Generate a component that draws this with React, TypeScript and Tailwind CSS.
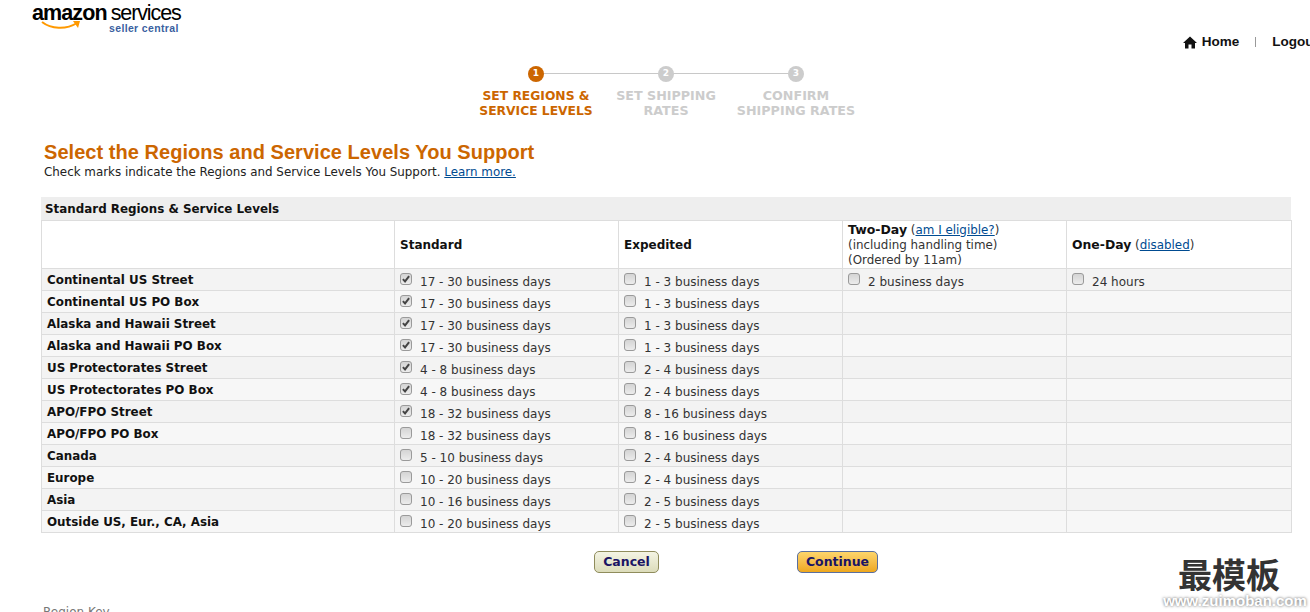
import React from "react";

const verdana = "font-['DejaVu_Sans',Verdana,sans-serif]";

type Row = { name: string; std: string; exp: string; on?: boolean };
const rows: Row[] = [
  { name: "Continental US Street", std: "17 - 30 business days", exp: "1 - 3 business days", on: true },
  { name: "Continental US PO Box", std: "17 - 30 business days", exp: "1 - 3 business days", on: true },
  { name: "Alaska and Hawaii Street", std: "17 - 30 business days", exp: "1 - 3 business days", on: true },
  { name: "Alaska and Hawaii PO Box", std: "17 - 30 business days", exp: "1 - 3 business days", on: true },
  { name: "US Protectorates Street", std: "4 - 8 business days", exp: "2 - 4 business days", on: true },
  { name: "US Protectorates PO Box", std: "4 - 8 business days", exp: "2 - 4 business days", on: true },
  { name: "APO/FPO Street", std: "18 - 32 business days", exp: "8 - 16 business days", on: true },
  { name: "APO/FPO PO Box", std: "18 - 32 business days", exp: "8 - 16 business days" },
  { name: "Canada", std: "5 - 10 business days", exp: "2 - 4 business days" },
  { name: "Europe", std: "10 - 20 business days", exp: "2 - 4 business days" },
  { name: "Asia", std: "10 - 16 business days", exp: "2 - 5 business days" },
  { name: "Outside US, Eur., CA, Asia", std: "10 - 20 business days", exp: "2 - 5 business days" },
];

function Check({ on }: { on?: boolean }) {
  return (
    <span className="inline-flex w-[12px] h-[12px] shrink-0 items-center justify-center rounded-[3px] border border-[#9a9a9a] bg-gradient-to-b from-[#d4d4d4] to-[#ececec]">
      {on && (
        <svg width="8" height="8" viewBox="0 0 9 9">
          <path d="M1 4.6 L3.4 7.2 L8 1.2" fill="none" stroke="#444" strokeWidth="2.2" />
        </svg>
      )}
    </span>
  );
}

function Opt({ on, text }: { on?: boolean; text: string }) {
  return (
    <div className="flex items-start gap-[8px] h-[21px]">
      <span className="mt-[4px] flex"><Check on={on} /></span>
      <span className="mt-[6px] leading-[15px] whitespace-nowrap">{text}</span>
    </div>
  );
}

function Step({ n, active, a, b, line }: { n: number; active?: boolean; a: string; b: string; line?: boolean }) {
  return (
    <div className="relative w-[130px] flex flex-col items-center">
      {line && <span className="absolute left-[65px] top-[7px] h-px w-[130px] bg-[#c8c8c8]" />}
      <span className={`relative z-10 flex h-4 w-4 items-center justify-center rounded-full text-[9px] font-bold text-white ${active ? "bg-[#cc6600]" : "bg-[#cccccc]"}`}>{n}</span>
      <div className={`text-center leading-[15px] font-bold whitespace-nowrap ${active ? "mt-[7px] text-[12.3px] text-[#cc6600]" : "mt-[6px] text-[12.7px] text-[#cccccc]"}`}>
        <div>{a}</div>
        <div>{b}</div>
      </div>
    </div>
  );
}

export default function App() {
  return (
    <div className={`relative h-[612px] w-[1310px] overflow-hidden bg-white text-[12px] text-[#333] ${verdana}`}>
      <header className="flex h-[66px] items-start justify-between pl-[32px]">
        <div className="relative h-[36px] w-[150px] mt-[3px]">
          <div className="flex items-baseline whitespace-nowrap text-[21.5px] leading-[20px] text-black font-['Liberation_Sans',Arial,sans-serif]">
            <span className="font-bold tracking-[-0.9px]">amazon</span>
            <span className="ml-[4px] tracking-[-1.1px]">services</span>
          </div>
          <svg className="absolute left-[9px] top-[17px]" width="40" height="11" viewBox="0 0 40 11">
            <path d="M1 2 C10 9 25 10 36 3" fill="none" stroke="#f90" strokeWidth="2" />
            <path d="M32 1 L39 1 L37 8 Z" fill="#f90" />
          </svg>
          <div className="absolute left-[77px] top-[20px] whitespace-nowrap text-[10.5px] leading-[10px] font-bold tracking-[0.35px] text-[#3a5f9f] font-['Liberation_Sans',Arial,sans-serif]">
            seller central
          </div>
        </div>
        <nav className="mr-[-8px] mt-[32px] flex items-center text-[13.5px] font-bold text-[#111] font-['Liberation_Sans',Arial,sans-serif]">
          <svg width="14" height="13" viewBox="0 0 14 13" className="mr-[5px]">
            <path d="M7 0.5 L0 7 L2 7 L2 12.5 L5.5 12.5 L5.5 8.5 L8.5 8.5 L8.5 12.5 L12 12.5 L12 7 L14 7 Z" fill="#111" />
          </svg>
          <span>Home</span>
          <span className="mx-[16px] h-[10px] w-px bg-[#999]" />
          <span>Logout</span>
        </nav>
      </header>

      <div className="flex justify-center pl-[22px]">
        <Step n={1} active a="SET REGIONS &" b="SERVICE LEVELS" line />
        <Step n={2} a="SET SHIPPING" b="RATES" line />
        <Step n={3} a="CONFIRM" b="SHIPPING RATES" />
      </div>

      <main className="pl-[41px] pr-[19px]">
        <h1 className="mt-[21px] pl-[3px] text-[20px] leading-[24px] tracking-[0.04px] font-bold text-[#cc6600] font-['Liberation_Sans',Arial,sans-serif]">
          Select the Regions and Service Levels You Support
        </h1>
        <p className="mt-[1px] pl-[3px] text-[11.9px] leading-[15px] text-[#222]">
          Check marks indicate the Regions and Service Levels You Support. <a className="underline text-[#004b91]">Learn more.</a>
        </p>

        <div className="mt-[17px] flex h-[23px] items-center bg-[#eeeeee] pl-[4px] pt-[3px] font-bold text-[#111] text-[11.9px]">
          Standard Regions &amp; Service Levels
        </div>
        <table className="w-[1250px] table-fixed border-collapse">
          <colgroup>
            <col className="w-[353px]" />
            <col className="w-[224px]" />
            <col className="w-[224px]" />
            <col className="w-[224px]" />
            <col className="w-[225px]" />
          </colgroup>
          <thead>
            <tr className="h-[48px] bg-white text-left align-middle">
              <th className="border border-[#dddddd]" />
              <th className="border border-[#dddddd] pl-[5px] pt-[1px] font-bold text-[#111]">Standard</th>
              <th className="border border-[#dddddd] pl-[5px] pt-[1px] font-bold text-[#111]">Expedited</th>
              <th className="border border-[#dddddd] pl-[5px] pt-[1px] text-[11.9px] font-normal leading-[15px]">
                <b className="text-[12.5px] leading-none text-[#111]">Two-Day</b> (<a className="underline text-[#004b91]">am I eligible?</a>)<br />
                (including handling time)<br />
                (Ordered by 11am)
              </th>
              <th className="border border-[#dddddd] pl-[5px] pt-[3px] text-[11.9px] font-normal">
                <b className="text-[12.4px] leading-none text-[#111]">One-Day</b> (<a className="underline text-[#004b91]">disabled</a>)
              </th>
            </tr>
          </thead>
          <tbody>
            {rows.map((r, i) => (
              <tr key={r.name} className={`h-[22px] ${i % 2 === 0 ? "bg-[#f3f3f3]" : "bg-[#f7f7f7]"}`}>
                <td className="border border-[#dddddd] pl-[5px] text-[11.9px] font-bold text-[#111] leading-[15px] pt-[1px]">{r.name}</td>
                <td className="border border-[#dddddd] pl-[5px] align-top"><Opt on={r.on} text={r.std} /></td>
                <td className="border border-[#dddddd] pl-[5px] align-top"><Opt text={r.exp} /></td>
                <td className="border border-[#dddddd] pl-[5px] align-top">{i === 0 && <Opt text="2 business days" />}</td>
                <td className="border border-[#dddddd] pl-[5px] align-top">{i === 0 && <Opt text="24 hours" />}</td>
              </tr>
            ))}
          </tbody>
        </table>

        <div className="mt-[18px] flex pl-[553px]">
          <button className="h-[22px] w-[65px] rounded-[5px] border border-[#8f8c5c] bg-gradient-to-b from-[#f4f4e4] to-[#dcdcba] text-[12.5px] font-bold text-[#1a1464]">Cancel</button>
          <button className="ml-[138px] h-[22px] w-[81px] rounded-[5px] border border-[#5a6f9f] bg-gradient-to-b from-[#fdd56a] to-[#eea81c] text-[12.5px] font-bold text-[#1a1464]">Continue</button>
        </div>

        <div className="mt-[32px] pl-[2px] text-[12px] leading-[15px] text-[#777]">Region Key</div>
      </main>

      <div className="absolute left-[1148px] top-[555px] flex w-[162px] flex-col items-center">
        <div className="text-[34px] leading-[38px] font-bold text-[#333] font-['Noto_Sans_CJK_SC',sans-serif]">最模板</div>
        <div className="mt-[1px] pl-[12px] whitespace-nowrap text-[15px] leading-[14px] font-bold text-white [text-shadow:0_0_3px_#555] font-['Liberation_Sans',Arial,sans-serif]">www.zuimoban.com</div>
      </div>
    </div>
  );
}
